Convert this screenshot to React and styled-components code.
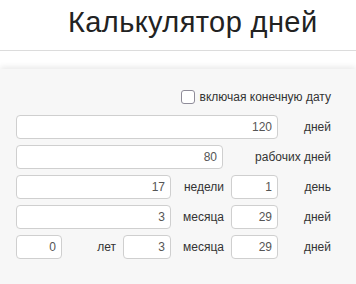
import React from 'react';
import styled, { createGlobalStyle } from 'styled-components';

const GlobalStyle = createGlobalStyle`
    body {
        margin: 0;
        background: #fff;
        font-family: "Liberation Sans", Arial, sans-serif;
    }
`

function App(){
    return (
        <>
            <GlobalStyle/>
            <Header>
                <Title>Калькулятор дней</Title>
            </Header>
            <Panel>
                <CheckRow>
                    <CheckBox type="checkbox"/>
                    <span>включая конечную дату</span>
                </CheckRow>
                <Grid>
                    <Field span="1 / 6" defaultValue="120"/>
                    <Unit last>дней</Unit>

                    <Field span="1 / 5" gap defaultValue="80"/>
                    <Unit span="5 / 7" last>рабочих дней</Unit>

                    <Field span="1 / 4" defaultValue="17"/>
                    <Unit>недели</Unit>
                    <Field defaultValue="1"/>
                    <Unit last>день</Unit>

                    <Field span="1 / 4" defaultValue="3"/>
                    <Unit>месяца</Unit>
                    <Field defaultValue="29"/>
                    <Unit last>дней</Unit>

                    <Field defaultValue="0"/>
                    <Unit>лет</Unit>
                    <Field defaultValue="3"/>
                    <Unit>месяца</Unit>
                    <Field defaultValue="29"/>
                    <Unit last>дней</Unit>
                </Grid>
            </Panel>
        </>
    )
}

const Header = styled.div`
    height: 50px;
    border-bottom: 1px solid #dcdcdc;
    padding-left: 68px;
`

const Title = styled.h1`
    margin: 0;
    font-size: 29px;
    font-weight: 400;
    line-height: 45px;
    letter-spacing: 0.4px;
    color: #222;
`

const Panel = styled.div`
    margin-top: 18px;
    min-height: 215px;
    box-sizing: border-box;
    padding: 20px 25px 20px 16px;
    background: #f7f7f7;
    box-shadow: 0 -2px 6px rgba(0, 0, 0, 0.09);
`

const CheckRow = styled.label`
    display: flex;
    justify-content: flex-end;
    align-items: center;
    gap: 5px;
    height: 16px;
    margin-bottom: 10px;
    font-size: 12px;
    color: #333;
`

const CheckBox = styled.input`
    appearance: none;
    margin: 0;
    width: 14px;
    height: 14px;
    border: 1px solid #8f8c99;
    border-radius: 3px;
    background: #fff;
    box-sizing: border-box;
`

const Grid = styled.div`
    display: grid;
    grid-template-columns: 46px 61px 48px 60px 47px 53px;
    grid-auto-rows: 24px;
    row-gap: 6px;
`

const Field = styled.input`
    grid-column: ${p => p.span || 'auto'};
    margin-right: ${p => p.gap ? '8px' : '0'};
    min-width: 0;
    box-sizing: border-box;
    height: 24px;
    padding: 0 5px;
    border: 1px solid #cfcfcf;
    border-radius: 4px;
    background: #fff;
    text-align: right;
    font-family: "Liberation Sans", Arial, sans-serif;
    font-size: 12px;
    color: #555;
`

const Unit = styled.span`
    grid-column: ${p => p.span || 'auto'};
    display: flex;
    align-items: center;
    justify-content: flex-end;
    padding-right: ${p => p.last ? '0' : '7px'};
    font-size: 12px;
    color: #333;
    white-space: nowrap;
`

export default App;
